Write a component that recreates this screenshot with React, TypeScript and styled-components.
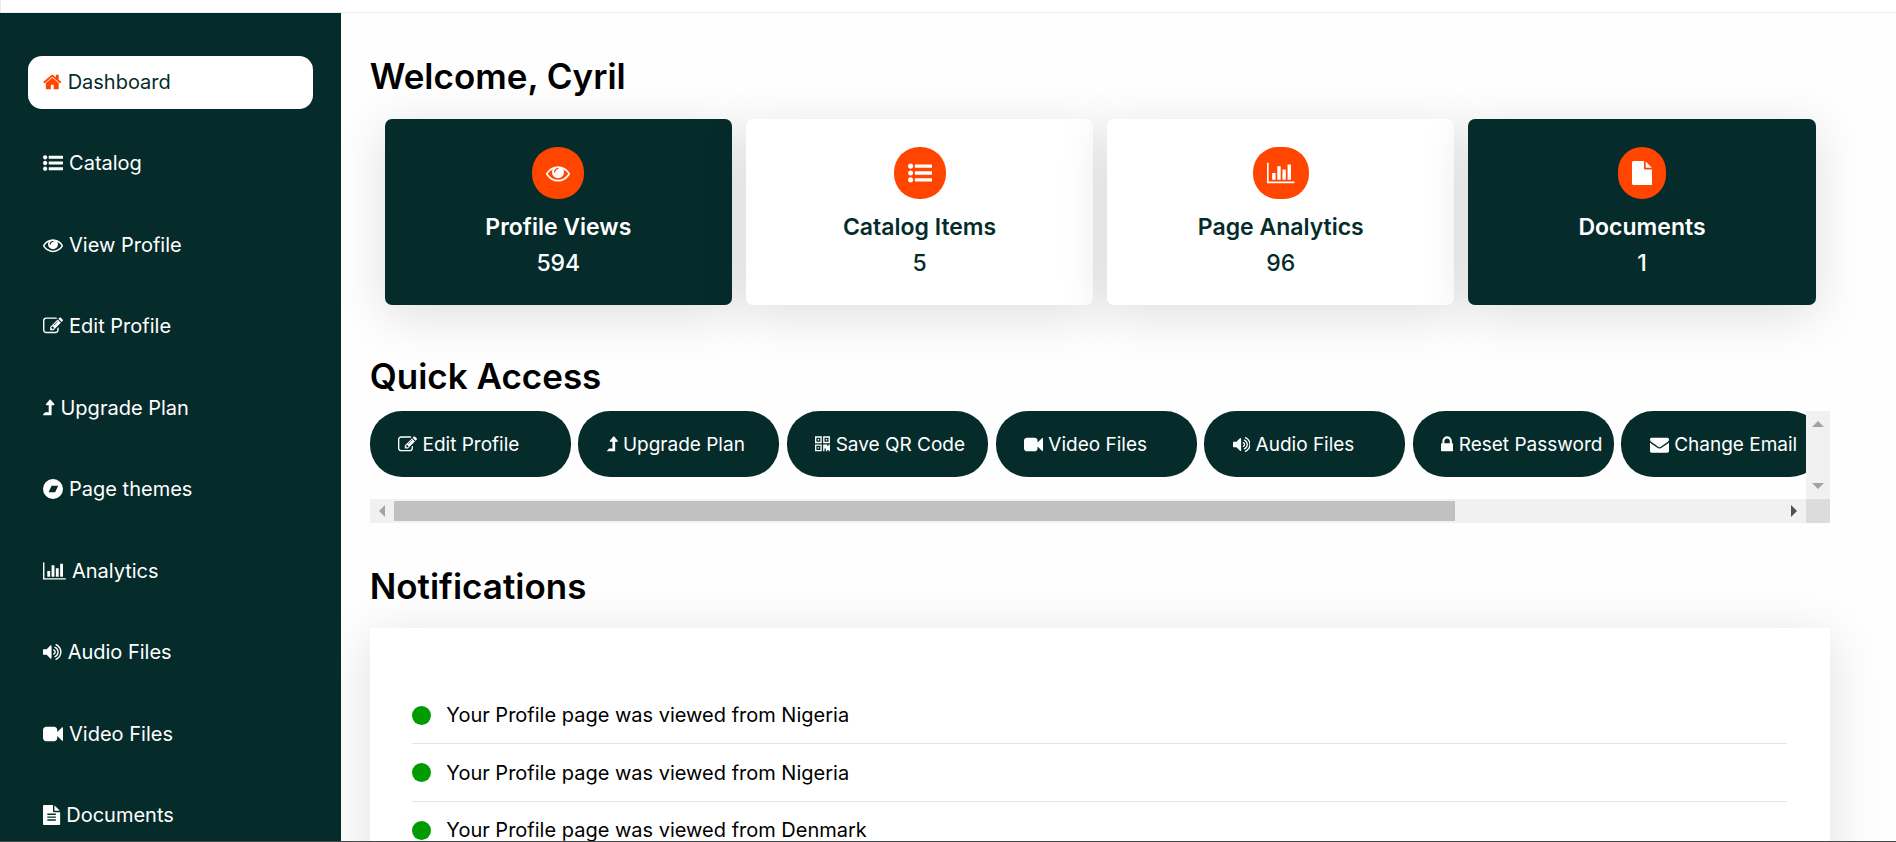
import React from "react";
import styled, { createGlobalStyle } from "styled-components";

const colors = {
  dark: "#052c2b",
  accent: "#ff4500",
  online: "#009b00",
};

const GlobalStyle = createGlobalStyle`
  *, *::before, *::after { box-sizing: border-box; }
  body {
    margin: 0;
    background: #fefefe;
    color: #000;
    font-family: Inter, "Liberation Sans", sans-serif;
    font-size: 20px;
  }
  h1, h2, h3, p, ul { margin: 0; padding: 0; }
  ul { list-style: none; }
`;

/* Icons share a 1792-unit em with the baseline at 1536. */
type IconShape = { x?: number; w: number; d: string };

const icons = {
  home: {
    x: 64,
    w: 1664,
    d: "M1472 992v480q0 26-19 45t-45 19h-384v-384h-256v384h-384q-26 0-45-19t-19-45v-480q0-1 .5-3t.5-3l575-474 575 474q1 2 1 6zm223-69l-62 74q-8 9-21 11h-3q-13 0-21-7l-692-577-692 577q-12 8-24 7-13-2-21-11l-62-74q-8-10-7-23.5t11-21.5l719-599q32-26 76-26t76 26l244 204v-195q0-14 9-23t23-9h192q14 0 23 9t9 23v408l219 182q10 8 11 21.5t-7 23.5z",
  },
  list: {
    w: 1792,
    d: "M384 1408q0 80-56 136t-136 56-136-56-56-136 56-136 136-56 136 56 56 136zm0-512q0 80-56 136t-136 56-136-56-56-136 56-136 136-56 136 56 56 136zm1408 416v192q0 13-9.5 22.5t-22.5 9.5h-1216q-13 0-22.5-9.5t-9.5-22.5v-192q0-13 9.5-22.5t22.5-9.5h1216q13 0 22.5 9.5t9.5 22.5zm-1408-928q0 80-56 136t-136 56-136-56-56-136 56-136 136-56 136 56 56 136zm1408 416v192q0 13-9.5 22.5t-22.5 9.5h-1216q-13 0-22.5-9.5t-9.5-22.5v-192q0-13 9.5-22.5t22.5-9.5h1216q13 0 22.5 9.5t9.5 22.5zm0-512v192q0 13-9.5 22.5t-22.5 9.5h-1216q-13 0-22.5-9.5t-9.5-22.5v-192q0-13 9.5-22.5t22.5-9.5h1216q13 0 22.5 9.5t9.5 22.5z",
  },
  eye: {
    w: 1792,
    d: "M1664 960q-152-236-381-353 61 104 61 225 0 185-131.5 316.5t-316.5 131.5-316.5-131.5-131.5-316.5q0-121 61-225-229 117-381 353 133 205 333.5 326.5t434.5 121.5 434.5-121.5 333.5-326.5zm-720-384q0-20-14-34t-34-14q-125 0-214.5 89.5t-89.5 214.5q0 20 14 34t34 14 34-14 14-34q0-86 61-147t147-61q20 0 34-14t14-34zm848 384q0 34-20 69-140 230-376.5 368.5t-499.5 138.5-499.5-139-376.5-368q-20-35-20-69t20-69q140-229 376.5-368t499.5-139 499.5 139 376.5 368q20 35 20 69z",
  },
  edit: {
    w: 1792,
    d: "M888 1184l116-116-152-152-116 116v56h96v96h56zm440-720q-16-16-33 1l-350 350q-17 17-1 33t33-1l350-350q17-17 1-33zm80 594v190q0 119-84.5 203.5t-203.5 84.5h-832q-119 0-203.5-84.5t-84.5-203.5v-832q0-119 84.5-203.5t203.5-84.5h832q63 0 117 25 15 7 18 23 3 17-9 29l-49 49q-14 14-32 8-23-6-45-6h-832q-66 0-113 47t-47 113v832q0 66 47 113t113 47h832q66 0 113-47t47-113v-126q0-13 9-22l64-64q15-15 35-7t20 29zm-96-738l288 288-672 672h-288v-288zm444 132l-92 92-288-288 92-92q28-28 68-28t68 28l152 152q28 28 28 68t-28 68z",
  },
  levelUp: {
    w: 1024,
    d: "M1018 603q-18 37-58 37h-192v864q0 14-9 23t-23 9h-704q-21 0-29-18q-8-20 4-35l160-192q9-11 25-11h320v-640h-192q-40 0-58-37q-17-37 9-68l320-384q18-22 49-22t49 22l320 384q27 32 9 68z",
  },
  themes: {
    w: 1792,
    d: "M896 0a896 896 0 1 1 0 1792a896 896 0 1 1 0-1792zM500 1190h590l270-588h-590z",
  },
  chart: {
    w: 2048,
    d: "M640 896v512h-256v-512h256zm384-512v1024h-256v-1024h256zm1024 1152v128h-2048v-1536h128v1408h1920zm-640-896v768h-256v-768h256zm384-384v1152h-256v-1152h256z",
  },
  audio: {
    x: 64,
    w: 1664,
    d: "M832 352v1088q0 26-19 45t-45 19-45-19l-333-333h-262q-26 0-45-19t-19-45v-384q0-26 19-45t45-19h262l333-333q19-19 45-19t45 19 19 45zm384 544q0 76-42.5 141.5t-112.5 93.5q-10 5-25 5-26 0-45-18.5t-19-45.5q0-21 12-35.5t29-25 34-23 29-36 12-56.5-12-56.5-29-36-34-23-29-25-12-35.5q0-27 19-45.5t45-18.5q15 0 25 5 70 27 112.5 93t42.5 142zm256 0q0 153-85 282.5t-225 188.5q-13 5-25 5-27 0-46-19t-19-45q0-39 39-59 56-29 76-44 74-54 115.5-135.5t41.5-173.5-41.5-173.5-115.5-135.5q-20-15-76-44-39-20-39-59 0-26 19-45t45-19q13 0 26 5 140 59 225 188.5t85 282.5zm256 0q0 230-127 422.5t-338 283.5q-13 5-26 5-26 0-45-19t-19-45q0-36 39-59 7-4 22.5-10.5t22.5-10.5q46-25 82-51 123-91 192-227t69-289-69-289-192-227q-36-26-82-51-7-4-22.5-10.5t-22.5-10.5q-39-23-39-59 0-26 19-45t45-19q13 0 26 5 211 91 338 283.5t127 422.5z",
  },
  video: {
    w: 1792,
    d: "M1792 352v1088q0 42-39 59-13 5-25 5-27 0-45-19l-403-403v166q0 119-84.5 203.5t-203.5 84.5h-704q-119 0-203.5-84.5t-84.5-203.5v-704q0-119 84.5-203.5t203.5-84.5h704q119 0 203.5 84.5t84.5 203.5v165l403-402q18-19 45-19 12 0 25 5 39 17 39 59z",
  },
  fileText: {
    x: 128,
    w: 1536,
    d: "M1596 476q14 14 28 36h-472v-472q22 14 36 28zm-476 164h544v1056q0 40-28 68t-68 28h-1344q-40 0-68-28t-28-68v-1600q0-40 28-68t68-28h800v544q0 40 28 68t68 28zm160 736v-64q0-14-9-23t-23-9h-704q-14 0-23 9t-9 23v64q0 14 9 23t23 9h704q14 0 23-9t9-23zm0-256v-64q0-14-9-23t-23-9h-704q-14 0-23 9t-9 23v64q0 14 9 23t23 9h704q14 0 23-9t9-23zm0-256v-64q0-14-9-23t-23-9h-704q-14 0-23 9t-9 23v64q0 14 9 23t23 9h704q14 0 23-9t9-23z",
  },
  file: {
    x: 128,
    w: 1536,
    d: "M1152 512v-472q22 14 36 28l408 408q14 14 28 36h-472zm-128 32q0 40 28 68t68 28h544v1056q0 40-28 68t-68 28h-1344q-40 0-68-28t-28-68v-1600q0-40 28-68t68-28h800v544z",
  },
  qrcode: {
    w: 1408,
    d: "M0 128h640v640h-640zM128 256v384h384v-384zM256 384h128v128h-128zM768 128h640v640h-640zM896 256v384h384v-384zM1024 384h128v128h-128zM0 896h640v640h-640zM128 1024v384h384v-384zM256 1152h128v128h-128zM768 896h384v128h128v-128h128v512h-384v-128h-128v256h-128zM1024 1408h128v128h-128zM1280 1408h128v128h-128z",
  },
  lock: {
    x: 320,
    w: 1152,
    d: "M640 768h512v-192q0-106-75-181t-181-75-181 75-75 181v192zm832 96v576q0 40-28 68t-68 28h-960q-40 0-68-28t-28-68v-576q0-40 28-68t68-28h32v-192q0-184 132-316t316-132 316 132 132 316v192h32q40 0 68 28t28 68z",
  },
  envelope: {
    w: 1792,
    d: "M1792 710v794q0 66-47 113t-113 47h-1472q-66 0-113-47t-47-113v-794q44 49 101 87 362 246 497 345 57 42 92.5 65.5t94.5 48 110 24.5h2q51 0 110-24.5t94.5-48 92.5-65.5q170-123 498-345 57-39 100-87zm0-294q0 79-49 151t-122 123q-376 261-468 325-10 7-42.5 31t-54 38.5-52 32.5-57.5 27-50 9h-2q-23 0-50-9t-57.5-27-52-32.5-54-38.5-42.5-31q-91-64-262-182.5t-205-142.5q-62-42-117-115.5t-55-136.5q0-78 41.5-130t118.5-52h1472q65 0 112.5 47t47.5 113z",
  },
} satisfies Record<string, IconShape>;

type IconName = keyof typeof icons;

const Glyph = styled.svg`
  height: 1em;
  vertical-align: -3px;
  fill: currentColor;
  fill-rule: evenodd;
`;

function Icon({ name }: { name: IconName }) {
  const { x = 0, w, d }: IconShape = icons[name];
  return (
    <Glyph viewBox={`${x} 0 ${w} 1792`} aria-hidden="true">
      <path d={d} />
    </Glyph>
  );
}

const Shell = styled.div`
  display: flex;
  flex-direction: column;
  height: 100vh;
  overflow: hidden;
  border-bottom: 1px solid #46494b;
`;

const TopBar = styled.header`
  flex: none;
  height: 13px;
  background: #fff;
  border-left: 1px solid #ebebeb;
  border-bottom: 1px solid #ebebeb;
`;

const Body = styled.div`
  flex: 1;
  display: flex;
  min-height: 0;
`;

const Sidebar = styled.nav`
  flex: none;
  position: relative;
  z-index: 1;
  width: 18%;
  padding: 43px 1.5vw 0;
  background: ${colors.dark};
`;

const NavList = styled.ul`
  display: flex;
  flex-direction: column;
  gap: 1.5vw;
`;

const NavLink = styled.a<{ $active?: boolean }>`
  display: block;
  padding: 14px 15px;
  border-radius: 14px;
  line-height: 25px;
  text-decoration: none;
  white-space: nowrap;
  color: ${(p) => (p.$active ? colors.dark : "#fff")};
  background: ${(p) => (p.$active ? "#fff" : "transparent")};

  ${Glyph} {
    color: ${(p) => (p.$active ? colors.accent : "inherit")};
  }
`;

const Main = styled.main`
  flex: 1;
  min-width: 0;
  padding: 43px 3.5vw 0 1.5vw;
`;

const Title = styled.h2`
  font-size: 35px;
  line-height: 40px;
  font-weight: 600;
`;

const StatGrid = styled.section`
  display: grid;
  grid-template-columns: repeat(4, 1fr);
  gap: 14px;
  margin: 23px 0 51px;
  padding: 0 14px 0 15px;
`;

const StatCard = styled.article<{ $dark?: boolean }>`
  display: flex;
  flex-direction: column;
  align-items: center;
  gap: 8px;
  padding: 28px 14px;
  border-radius: 7px;
  color: ${(p) => (p.$dark ? "#fff" : colors.dark)};
  background: ${(p) => (p.$dark ? colors.dark : "#fff")};
  box-shadow: 0 10px 50px rgba(0, 0, 0, 0.13);
`;

const Badge = styled.span`
  display: flex;
  margin-bottom: 6px;
  padding: 14px;
  border-radius: 25px;
  font-size: 24px;
  color: #fff;
  background: ${colors.accent};
`;

const StatLabel = styled.h3`
  font-size: 23px;
  line-height: 28px;
  font-weight: 600;
`;

const StatValue = styled.p`
  font-size: 23px;
  line-height: 28px;
  font-weight: 500;
`;

const Scroller = styled.section`
  display: grid;
  grid-template-columns: 1fr 24px;
  grid-template-rows: 88px 24px;
  margin: 15px 0 43px;
`;

const PillRow = styled.div`
  display: flex;
  align-items: flex-start;
  gap: 0.4vw;
  min-width: 0;
  overflow: hidden;
`;

const Pill = styled.button`
  flex: none;
  width: 14%;
  height: 66px;
  padding: 0 0 0 1.5vw;
  border: 0;
  border-radius: 32px;
  font: inherit;
  font-size: 19px;
  text-align: left;
  white-space: nowrap;
  color: #fff;
  background: ${colors.dark};
`;

const Track = styled.div<{ $vertical?: boolean }>`
  display: flex;
  flex-direction: ${(p) => (p.$vertical ? "column" : "row")};
  justify-content: space-between;
  background: #f1f1f1;
`;

const Groove = styled.div`
  flex: 1;
  padding: 2px 0;
`;

const Thumb = styled.div`
  width: 76.5%;
  height: 100%;
  background: #c1c1c1;
`;

const Corner = styled.div`
  background: #dcdcdc;
`;

const ArrowButton = styled.button`
  flex: none;
  display: flex;
  width: 24px;
  height: 24px;
  padding: 0;
  border: 0;
  color: #505050;
  background: none;

  &:disabled {
    color: #a3a3a3;
  }
`;

const arrows = {
  left: "M9 12l6-6v12z",
  right: "M15 12l-6-6v12z",
  up: "M12 10l6 6h-12z",
  down: "M12 14l6-6h-12z",
};

function Arrow({ to, disabled }: { to: keyof typeof arrows; disabled?: boolean }) {
  return (
    <ArrowButton type="button" aria-label={`Scroll ${to}`} disabled={disabled}>
      <svg width="24" height="24" viewBox="0 0 24 24" fill="currentColor" aria-hidden="true">
        <path d={arrows[to]} />
      </svg>
    </ArrowButton>
  );
}

const Panel = styled.section`
  min-height: 400px;
  margin-top: 22px;
  padding: 59px 2.25vw;
  background: #fff;
  box-shadow: 0 10px 50px rgba(0, 0, 0, 0.12);
`;

const Notice = styled.li`
  display: flex;
  align-items: center;
  gap: 15px;
  padding: 0.75vw 0;
  border-bottom: 1px solid #e5e5e5;
  line-height: 28px;
`;

const Dot = styled.span`
  flex: none;
  width: 19px;
  height: 19px;
  border-radius: 50%;
  background: ${colors.online};
`;

const navItems: { icon: IconName; label: string }[] = [
  { icon: "home", label: "Dashboard" },
  { icon: "list", label: "Catalog" },
  { icon: "eye", label: "View Profile" },
  { icon: "edit", label: "Edit Profile" },
  { icon: "levelUp", label: "Upgrade Plan" },
  { icon: "themes", label: "Page themes" },
  { icon: "chart", label: "Analytics" },
  { icon: "audio", label: "Audio Files" },
  { icon: "video", label: "Video Files" },
  { icon: "fileText", label: "Documents" },
];

const stats: { icon: IconName; label: string; value: number; dark?: boolean }[] = [
  { icon: "eye", label: "Profile Views", value: 594, dark: true },
  { icon: "list", label: "Catalog Items", value: 5 },
  { icon: "chart", label: "Page Analytics", value: 96 },
  { icon: "file", label: "Documents", value: 1, dark: true },
];

const shortcuts: { icon: IconName; label: string }[] = [
  { icon: "edit", label: "Edit Profile" },
  { icon: "levelUp", label: "Upgrade Plan" },
  { icon: "qrcode", label: "Save QR Code" },
  { icon: "video", label: "Video Files" },
  { icon: "audio", label: "Audio Files" },
  { icon: "lock", label: "Reset Password" },
  { icon: "envelope", label: "Change Email" },
];

const notices = ["Nigeria", "Nigeria", "Denmark"];

export default function App() {
  return (
    <>
      <GlobalStyle />
      <Shell>
        <TopBar />
        <Body>
          <Sidebar aria-label="Main">
            <NavList>
              {navItems.map(({ icon, label }, i) => (
                <li key={label}>
                  <NavLink href="#" $active={i === 0} aria-current={i === 0 ? "page" : undefined}>
                    <Icon name={icon} /> {label}
                  </NavLink>
                </li>
              ))}
            </NavList>
          </Sidebar>
          <Main>
            <Title as="h1">Welcome, Cyril</Title>
            <StatGrid>
              {stats.map(({ icon, label, value, dark }) => (
                <StatCard key={label} $dark={dark}>
                  <Badge>
                    <Icon name={icon} />
                  </Badge>
                  <StatLabel>{label}</StatLabel>
                  <StatValue>{value}</StatValue>
                </StatCard>
              ))}
            </StatGrid>
            <Title>Quick Access</Title>
            <Scroller>
              <PillRow>
                {shortcuts.map(({ icon, label }) => (
                  <Pill key={label} type="button">
                    <Icon name={icon} /> {label}
                  </Pill>
                ))}
              </PillRow>
              <Track $vertical>
                <Arrow to="up" disabled />
                <Arrow to="down" disabled />
              </Track>
              <Track>
                <Arrow to="left" disabled />
                <Groove>
                  <Thumb />
                </Groove>
                <Arrow to="right" />
              </Track>
              <Corner />
            </Scroller>
            <Title>Notifications</Title>
            <Panel>
              <ul>
                {notices.map((country, i) => (
                  <Notice key={i}>
                    <Dot />
                    {`Your Profile page was viewed from ${country}`}
                  </Notice>
                ))}
              </ul>
            </Panel>
          </Main>
        </Body>
      </Shell>
    </>
  );
}
